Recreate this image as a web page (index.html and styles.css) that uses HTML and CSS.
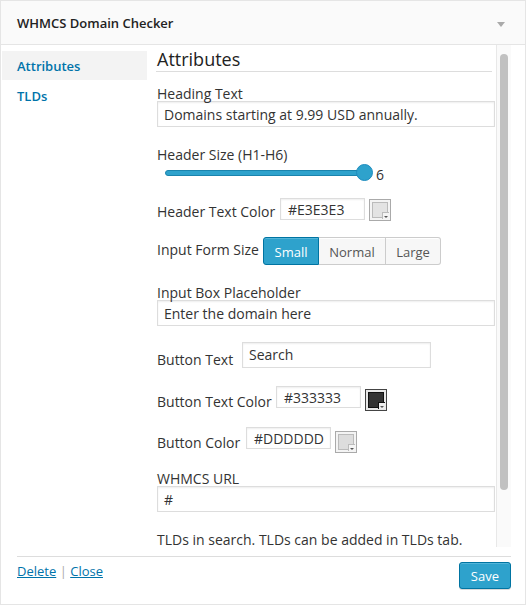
FILE: index.html
```html
<!DOCTYPE html>
<html>
<head>
<meta charset="utf-8">
<link rel="stylesheet" href="styles.css">
</head>
<body>
<div class="panel">
  <div class="panel-head">
    <span class="panel-title">WHMCS Domain Checker</span>
    <span class="toggle"></span>
  </div>
  <div class="panel-body">
    <ul class="tabs">
      <li class="tab active">Attributes</li>
      <li class="tab">TLDs</li>
    </ul>
    <div class="main">
      <div class="content">
        <h3 class="section-title">Attributes</h3>

        <label class="lbl blk lbl-heading">Heading Text</label>
        <div class="input wide">Domains starting at 9.99 USD annually.</div>

        <label class="lbl blk lbl-size">Header Size (H1-H6)</label>
        <div class="slider-row">
          <div class="slider">
            <div class="track"></div>
            <div class="thumb"></div>
          </div>
          <span class="slider-val">6</span>
        </div>

        <div class="row row-htc">
          <span class="lbl">Header Text Color</span>
          <div class="input color-input">#E3E3E3</div>
          <div class="swatch light"><span class="swatch-fill" style="background:#E3E3E3"></span></div>
        </div>

        <div class="row row-ifs">
          <span class="lbl">Input Form Size</span>
          <div class="btn-group">
            <span class="seg seg-s active">Small</span>
            <span class="seg seg-n">Normal</span>
            <span class="seg seg-l">Large</span>
          </div>
        </div>

        <label class="lbl blk lbl-ph">Input Box Placeholder</label>
        <div class="input wide">Enter the domain here</div>

        <div class="row row-bt">
          <span class="lbl">Button Text</span>
          <div class="input text-input">Search</div>
        </div>

        <div class="row row-btc">
          <span class="lbl">Button Text Color</span>
          <div class="input color-input">#333333</div>
          <div class="swatch dark"><span class="swatch-fill" style="background:#333333"></span></div>
        </div>

        <div class="row row-bc">
          <span class="lbl">Button Color</span>
          <div class="input color-input">#DDDDDD</div>
          <div class="swatch light"><span class="swatch-fill" style="background:#DDDDDD"></span></div>
        </div>

        <label class="lbl blk lbl-url">WHMCS URL</label>
        <div class="input wide">#</div>

        <p class="note">TLDs in search. TLDs can be added in TLDs tab.</p>
      </div>
      <div class="scrollbar"><div class="scroll-thumb"></div></div>
    </div>
  </div>
  <div class="panel-foot">
    <div class="links"><a href="#">Delete</a> <span class="sep">|</span> <a href="#">Close</a></div>
    <button class="save">Save</button>
  </div>
</div>
</body>
</html>
```

FILE: styles.css
```css
* { box-sizing: border-box; }
html, body { margin: 0; padding: 0; background: #fff; }
body {
  font-family: "Open Sans", "Liberation Sans", sans-serif;
  color: #333;
  width: 527px;
  height: 608px;
  overflow: hidden;
}
.panel {
  width: 526px;
  height: 605px;
  border: 1px solid #e5e5e5;
  background: #fff;
  display: flex;
  flex-direction: column;
}
.panel-head {
  height: 44px;
  flex: none;
  background: #fafafa;
  border-bottom: 1px solid #e5e5e5;
  display: flex;
  align-items: center;
  justify-content: space-between;
  padding: 0 20px 0 16px;
}
.panel-title {
  font-size: 13px;
  font-weight: 600;
  color: #222;
  margin-top: 1px;
}
.toggle {
  width: 0;
  height: 0;
  border-left: 4px solid transparent;
  border-right: 4px solid transparent;
  border-top: 5px solid #aaa;
  margin-top: 3px;
}
.panel-body {
  height: 502px;
  flex: none;
  display: flex;
  padding-right: 14px;
}
.tabs {
  list-style: none;
  margin: 0;
  padding: 6px 0 0 1px;
  width: 146px;
  flex: none;
}
.tab {
  height: 29px;
  line-height: 31px;
  padding-left: 15px;
  font-size: 13px;
  font-weight: 600;
  color: #0073aa;
}
.tab + .tab { margin-top: 1px; }
.tab.active { background: #f3f3f3; }
.main {
  flex: 1;
  display: flex;
  min-width: 0;
}
.content {
  flex: 1;
  overflow: hidden;
  padding: 2px 1px 0 10px;
  min-width: 0;
}
.section-title {
  margin: 0 3px 0 -1px;
  padding-left: 1px;
  font-size: 18px;
  font-weight: 400;
  line-height: 24px;
  color: #222;
  border-bottom: 1px solid #ddd;
}
.lbl {
  display: block;
  font-size: 14px;
  line-height: 16px;
  color: #333;
  white-space: nowrap;
  flex: none;
}
.blk { margin-bottom: -1px; }
.lbl-heading { margin-top: 14px; }
.lbl-size { margin-top: 20px; }
.lbl-ph { margin-top: 20px; }
.lbl-url { margin-top: 18px; }
.input {
  border: 1px solid #ddd;
  box-shadow: inset 0 1px 2px rgba(0,0,0,.07);
  background: #fff;
  color: #333;
  font-size: 14px;
  white-space: nowrap;
  overflow: hidden;
}
.wide {
  height: 26px;
  line-height: 22px;
  padding: 2px 6px 0;
}
.slider-row {
  margin-top: 2px;
  height: 17px;
  display: flex;
  align-items: center;
  padding-left: 8px;
}
.slider {
  width: 208px;
  height: 17px;
  display: flex;
  align-items: center;
}
.track {
  flex: 1;
  height: 6px;
  margin-right: -10px;
  background: #2ea2cc;
  border: 1px solid #1b84ad;
  border-radius: 3px;
}
.thumb {
  width: 17px;
  height: 17px;
  border-radius: 50%;
  background: #2ea2cc;
  border: 1px solid #1e8cbe;
  position: relative;
  flex: none;
}
.slider-val {
  font-size: 14px;
  color: #333;
  margin-left: 3px;
  margin-top: 3px;
}
.row {
  display: flex;
  align-items: flex-start;
}
.row-htc { margin-top: 17px; }
.row-htc .lbl { margin-top: 6px; width: 123px; }
.row-htc .swatch { margin-top: 1px; }
.row-ifs { margin-top: 16px; }
.row-ifs .lbl { margin-top: 5px; width: 106px; }
.row-bt { margin-top: 16px; }
.row-bt .lbl { margin-top: 10px; width: 85px; }
.row-btc { margin-top: 18px; }
.row-btc .lbl { margin-top: 8px; width: 119px; }
.row-btc .swatch { margin-top: 3px; }
.row-bc { margin-top: 16px; }
.row-bc .lbl { margin-top: 8px; width: 89px; }
.row-bc .swatch { margin-top: 4px; }
.color-input {
  width: 85px;
  height: 22px;
  line-height: 20px;
  padding: 1px 7px 0;
}
.text-input {
  width: 189px;
  height: 26px;
  line-height: 22px;
  padding: 1px 6px 0;
}
.swatch {
  width: 22px;
  height: 22px;
  margin-left: 4px;
  border: 1px solid #aaa;
  background: #f4f4f4;
  padding: 2px;
  position: relative;
  flex: none;
}
.swatch.dark { border-color: #444; background: #e8e8e8; }
.swatch-fill {
  display: block;
  width: 100%;
  height: 100%;
  border: 1px solid #bbb;
}
.swatch.dark .swatch-fill { border-color: #111; }
.swatch::after {
  content: "";
  position: absolute;
  right: 1px;
  bottom: 1px;
  width: 6px;
  height: 6px;
  background: #f4f4f4;
  border-left: 1px solid #bbb;
  border-top: 1px solid #bbb;
}
.swatch.dark::after { background: #eee; border-color: #111; }
.swatch::before {
  content: "";
  position: absolute;
  right: 2px;
  bottom: 2px;
  width: 0;
  height: 0;
  border-left: 2px solid transparent;
  border-right: 2px solid transparent;
  border-top: 2px solid #555;
  z-index: 1;
}
.btn-group {
  display: flex;
  height: 28px;
}
.seg {
  height: 28px;
  line-height: 27px;
  padding-top: 1px;
  font-size: 13px;
  color: #555;
  background: #f7f7f7;
  border: 1px solid #ccc;
  border-left: none;
  box-shadow: inset 0 1px 0 #fff;
  text-align: center;
}
.seg-s { width: 56px; }
.seg-n { width: 67px; }
.seg-l { width: 55px; }
.seg:first-child { border-left: 1px solid #ccc; border-radius: 3px 0 0 3px; }
.seg:last-child { border-radius: 0 3px 3px 0; }
.seg.active {
  background: #2ea2cc;
  border-color: #0074a2;
  color: #fff;
  box-shadow: inset 0 1px 0 rgba(120,200,230,.5);
}
.note {
  margin: 18px 0 0;
  font-size: 14px;
  line-height: 19px;
  color: #333;
}
.scrollbar {
  width: 15px;
  flex: none;
  background: #fafafa;
  border-left: 1px solid #e8e8e8;
  padding: 9px 3px 0 3px;
}
.scroll-thumb {
  width: 8px;
  height: 436px;
  background: #c1c1c1;
  border-radius: 4px;
}
.panel-foot {
  margin: 9px 14px 0 16px;
  border-top: 1px solid #ddd;
  display: flex;
  justify-content: space-between;
  align-items: flex-start;
}
.links {
  margin-top: 5px;
  font-size: 13px;
  line-height: 18px;
  color: #999;
}
.links a { color: #0073aa; text-decoration: underline; }
.sep { color: #aaa; margin: 0; }
.save {
  margin-top: 5px;
  height: 27px;
  padding: 0 11px;
  font-family: "Open Sans", "Liberation Sans", sans-serif;
  font-size: 13px;
  color: #fff;
  background: #2ea2cc;
  border: 1px solid #0074a2;
  border-radius: 3px;
  box-shadow: inset 0 1px 0 rgba(120,200,230,.5), 0 1px 0 rgba(0,0,0,.15);
}
```
